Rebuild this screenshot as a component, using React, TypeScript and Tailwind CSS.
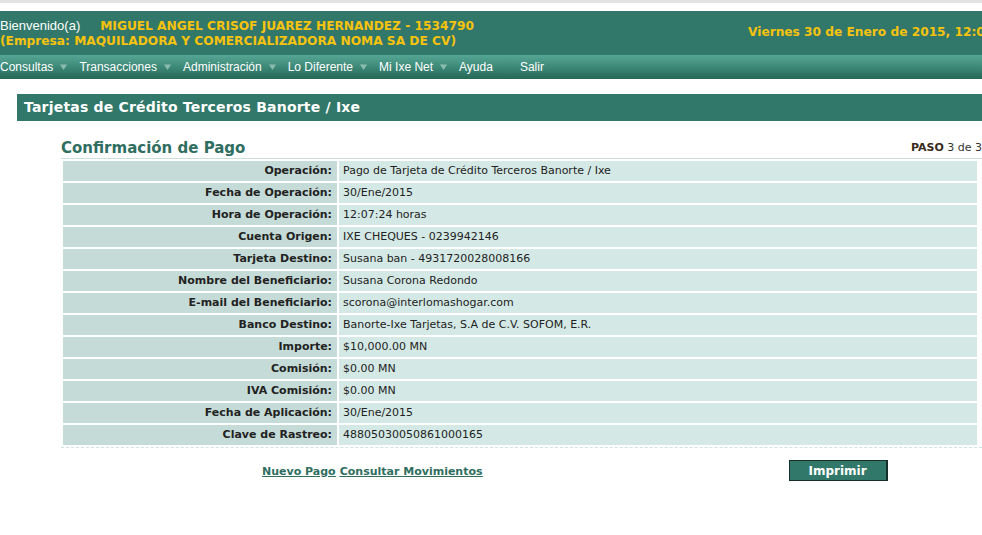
import React from 'react'

const verdana = { fontFamily: '"DejaVu Sans", Verdana, sans-serif' }

const rows: [string, string][] = [
    ['Operación:', 'Pago de Tarjeta de Crédito Terceros Banorte / Ixe'],
    ['Fecha de Operación:', '30/Ene/2015'],
    ['Hora de Operación:', '12:07:24 horas'],
    ['Cuenta Origen:', 'IXE CHEQUES - 0239942146'],
    ['Tarjeta Destino:', 'Susana ban - 4931720028008166'],
    ['Nombre del Beneficiario:', 'Susana Corona Redondo'],
    ['E-mail del Beneficiario:', 'scorona@interlomashogar.com'],
    ['Banco Destino:', 'Banorte-Ixe Tarjetas, S.A de C.V. SOFOM, E.R.'],
    ['Importe:', '$10,000.00 MN'],
    ['Comisión:', '$0.00 MN'],
    ['IVA Comisión:', '$0.00 MN'],
    ['Fecha de Aplicación:', '30/Ene/2015'],
    ['Clave de Rastreo:', '48805030050861000165'],
]

const menu = [
    { label: 'Consultas', arrow: true },
    { label: 'Transacciones', arrow: true },
    { label: 'Administración', arrow: true },
    { label: 'Lo Diferente', arrow: true },
    { label: 'Mi Ixe Net', arrow: true },
    { label: 'Ayuda', arrow: false },
    { label: 'Salir', arrow: false },
]

const Arrow = () => (
    <svg width="7" height="6" viewBox="0 0 7 6" className="ml-[7px] mr-[12px]">
        <path d="M0 0.5 L7 0.5 L3.5 6 Z" fill="#8cbcaf" />
    </svg>
)

export default function App() {
    return (
        <div className="w-[982px] h-[535px] overflow-hidden bg-white text-[#222]">
            <div className="h-[3px] bg-[#e2e2e2]" />
            <div className="h-[8px]" />

            <header className="h-[44px] bg-[#32786a] flex overflow-hidden">
                <div className="w-[748px] shrink-0 pt-[7px] leading-[15px]">
                    <div className="flex items-baseline">
                        <span className="text-white text-[13px]" style={{ fontFamily: '"Liberation Sans", Arial, sans-serif' }}>
                            Bienvenido(a)
                        </span>
                        <span className="ml-[20px] text-[12.2px] font-bold text-[#f7c30e]" style={verdana}>
                            MIGUEL ANGEL CRISOF JUAREZ HERNANDEZ - 1534790
                        </span>
                    </div>
                    <div className="text-[12.2px] font-bold text-[#f7c30e]" style={verdana}>
                        (Empresa: MAQUILADORA Y COMERCIALIZADORA NOMA SA DE CV)
                    </div>
                </div>
                <div className="pt-[14px] whitespace-nowrap text-[12.2px] leading-[15px] font-bold text-[#f7c30e]" style={verdana}>
                    Viernes 30 de Enero de 2015, 12:07 hrs
                </div>
            </header>

            <nav
                className="h-[24px] flex items-center bg-gradient-to-b from-[#56a695] via-[#3d8978] to-[#266756] text-white text-[12px]"
                style={{ fontFamily: '"Liberation Sans", Arial, sans-serif' }}
            >
                {menu.map((m, i) => (
                    <div key={m.label} className={`flex items-center ${i === 6 ? 'ml-[27px]' : ''}`}>
                        <span>{m.label}</span>
                        {m.arrow && <Arrow />}
                    </div>
                ))}
            </nav>

            <div className="h-[15px]" />

            <div className="ml-[17px] h-[27px] bg-[#32786a] flex items-center pl-[7px]">
                <span className="text-white font-bold text-[14px] tracking-[0.2px]" style={verdana}>
                    Tarjetas de Crédito Terceros Banorte / Ixe
                </span>
            </div>

            <section className="ml-[61px] mt-[16px]" style={verdana}>
                <div className="flex items-end justify-between h-[20px]">
                    <h1 className="text-[15px] leading-[18px] font-bold text-[#2f6e60]">Confirmación de Pago</h1>
                    <span className="text-[11px] leading-[14px] mb-[2px] text-[#333]">
                        <b className="text-[#3a2a1a]">PASO</b> 3 de 3
                    </span>
                </div>
                <div className="h-px bg-[#cbdeda] mt-[1px]" />
                <div className="flex flex-col gap-[2px] mt-[2px] px-[2px] mr-[3px] text-[11px]">
                    {rows.map(([label, value]) => (
                        <div key={label} className="flex h-[20px] gap-[2px]">
                            <div className="w-[274px] shrink-0 bg-[#c5dbd7] flex items-center justify-end pr-[5px] font-bold">
                                {label}
                            </div>
                            <div className="flex-1 bg-[#d4e9e5] flex items-center pl-[4px]">{value}</div>
                        </div>
                    ))}
                </div>
                <div className="mt-[2px] border-t border-dashed border-[#cfe5e0]" />

                <div className="flex items-start mt-[12px]">
                    <div className="ml-[201px] mt-[4px] flex gap-[4px] text-[11px] font-bold text-[#2f6e60] underline">
                        <a href="#">Nuevo Pago</a>
                        <a href="#">Consultar Movimientos</a>
                    </div>
                    <button className="ml-[306px] w-[99px] h-[21px] bg-[#32786a] border border-[#162f29] border-r-2 text-white text-[12px] font-bold">
                        Imprimir
                    </button>
                </div>
            </section>
        </div>
    )
}
